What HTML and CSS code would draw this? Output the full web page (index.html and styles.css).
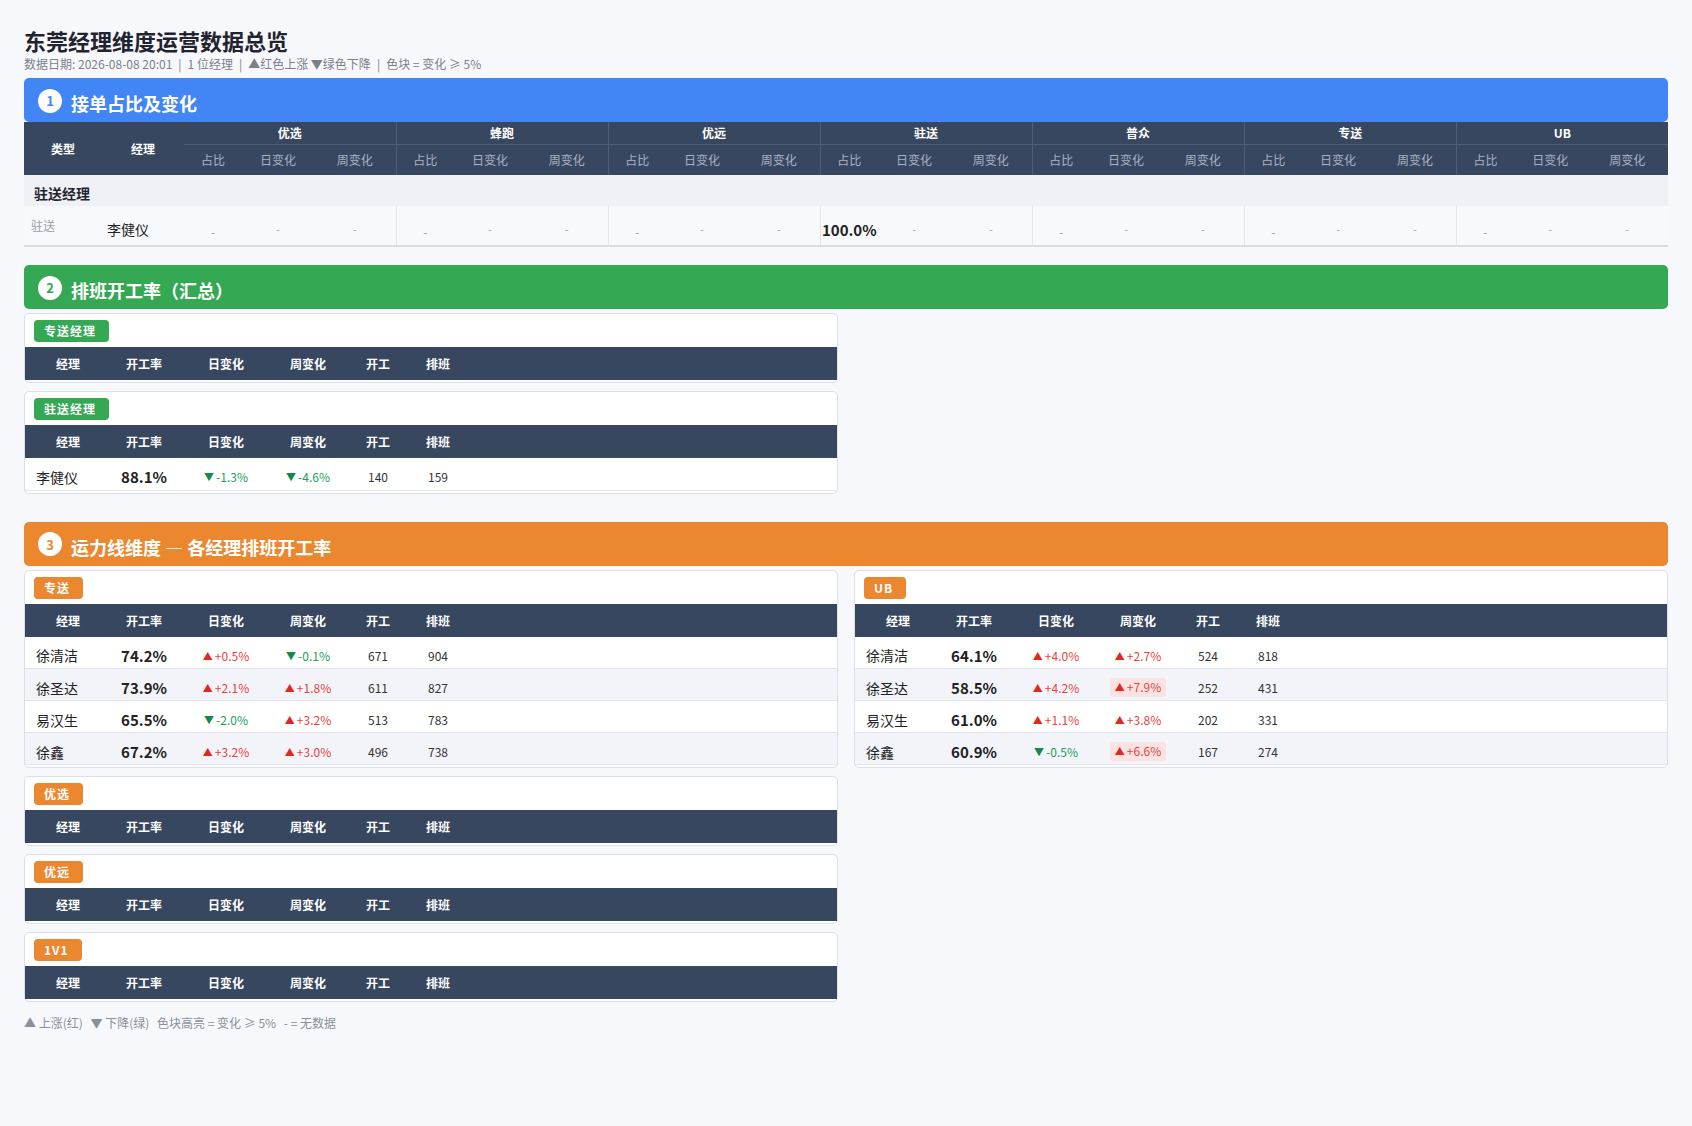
FILE: index.html
```html
<!DOCTYPE html>
<html lang="zh-CN">
<head>
<meta charset="utf-8">
<title>东莞经理维度运营数据总览</title>
<link rel="stylesheet" href="styles.css">
</head>
<body>
<div class="page">
  <h1 class="title">东莞经理维度运营数据总览</h1>
  <div class="subtitle">数据日期: 2026-08-08 20:01<span class="sep">|</span>1 位经理<span class="sep">|</span>▲红色上涨 ▼绿色下降<span class="sep">|</span>色块 = 变化 ≥ 5%</div>

  <section class="section first">
    <div class="sec-head sec-blue"><span class="sec-num">1</span><span class="sec-title">接单占比及变化</span></div>
    <table class="share">
      <colgroup>
        <col class="c-type"><col class="c-mgr">
        <col class="c-pct"><col class="c-day"><col class="c-week">
        <col class="c-pct"><col class="c-day"><col class="c-week">
        <col class="c-pct"><col class="c-day"><col class="c-week">
        <col class="c-pct"><col class="c-day"><col class="c-week">
        <col class="c-pct"><col class="c-day"><col class="c-week">
        <col class="c-pct"><col class="c-day"><col class="c-week">
        <col class="c-pct"><col class="c-day"><col class="c-week">
      </colgroup>
      <thead>
        <tr class="h-group">
          <th rowspan="2" class="h-fixed">类型</th>
          <th rowspan="2" class="h-fixed">经理</th>
          <th colspan="3" class="g">优选</th>
          <th colspan="3" class="g gs">蜂跑</th>
          <th colspan="3" class="g gs">优远</th>
          <th colspan="3" class="g gs">驻送</th>
          <th colspan="3" class="g gs">普众</th>
          <th colspan="3" class="g gs">专送</th>
          <th colspan="3" class="g gs">UB</th>
        </tr>
        <tr class="h-sub">
          <th>占比</th><th>日变化</th><th>周变化</th>
          <th class="gs">占比</th><th>日变化</th><th>周变化</th>
          <th class="gs">占比</th><th>日变化</th><th>周变化</th>
          <th class="gs">占比</th><th>日变化</th><th>周变化</th>
          <th class="gs">占比</th><th>日变化</th><th>周变化</th>
          <th class="gs">占比</th><th>日变化</th><th>周变化</th>
          <th class="gs">占比</th><th>日变化</th><th>周变化</th>
        </tr>
      </thead>
      <tbody>
        <tr class="cat-row"><td colspan="23">驻送经理</td></tr>
        <tr class="data-row">
          <td class="type">驻送</td>
          <td class="mgr">李健仪</td>
          <td class="pct dash-b">-</td><td class="dash">-</td><td class="dash">-</td>
          <td class="pct dash-b gs">-</td><td class="dash">-</td><td class="dash">-</td>
          <td class="pct dash-b gs">-</td><td class="dash">-</td><td class="dash">-</td>
          <td class="pct gs">100.0%</td><td class="dash">-</td><td class="dash">-</td>
          <td class="pct dash-b gs">-</td><td class="dash">-</td><td class="dash">-</td>
          <td class="pct dash-b gs">-</td><td class="dash">-</td><td class="dash">-</td>
          <td class="pct dash-b gs">-</td><td class="dash">-</td><td class="dash">-</td>
        </tr>
      </tbody>
    </table>
  </section>

  <section class="section">
    <div class="sec-head sec-green"><span class="sec-num">2</span><span class="sec-title">排班开工率（汇总）</span></div>
    <div class="cols">
      <div class="col">
        <div class="card">
          <div class="card-head"><span class="tag tag-green">专送经理</span></div>
          <table class="rate">
            <colgroup><col class="r1"><col class="r2"><col class="r3"><col class="r4"><col class="r5"><col class="r6"><col></colgroup>
            <thead><tr><th>经理</th><th>开工率</th><th>日变化</th><th>周变化</th><th>开工</th><th>排班</th><th></th></tr></thead>
          </table>
        </div>
        <div class="card">
          <div class="card-head"><span class="tag tag-green">驻送经理</span></div>
          <table class="rate">
            <colgroup><col class="r1"><col class="r2"><col class="r3"><col class="r4"><col class="r5"><col class="r6"><col></colgroup>
            <thead><tr><th>经理</th><th>开工率</th><th>日变化</th><th>周变化</th><th>开工</th><th>排班</th><th></th></tr></thead>
            <tbody>
              <tr><td class="name">李健仪</td><td class="rv">88.1%</td><td><span class="chg down"><span class="arr">▼</span>-1.3%</span></td><td><span class="chg down"><span class="arr">▼</span>-4.6%</span></td><td>140</td><td>159</td><td></td></tr>
            </tbody>
          </table>
        </div>
      </div>
      <div class="col"></div>
    </div>
  </section>

  <section class="section sec-wide">
    <div class="sec-head sec-orange"><span class="sec-num">3</span><span class="sec-title">运力线维度 — 各经理排班开工率</span></div>
    <div class="cols">
      <div class="col">
        <div class="card">
          <div class="card-head"><span class="tag tag-orange">专送</span></div>
          <table class="rate">
            <colgroup><col class="r1"><col class="r2"><col class="r3"><col class="r4"><col class="r5"><col class="r6"><col></colgroup>
            <thead><tr><th>经理</th><th>开工率</th><th>日变化</th><th>周变化</th><th>开工</th><th>排班</th><th></th></tr></thead>
            <tbody>
              <tr><td class="name">徐清洁</td><td class="rv">74.2%</td><td><span class="chg up"><span class="arr">▲</span>+0.5%</span></td><td><span class="chg down"><span class="arr">▼</span>-0.1%</span></td><td>671</td><td>904</td><td></td></tr>
              <tr><td class="name">徐圣达</td><td class="rv">73.9%</td><td><span class="chg up"><span class="arr">▲</span>+2.1%</span></td><td><span class="chg up"><span class="arr">▲</span>+1.8%</span></td><td>611</td><td>827</td><td></td></tr>
              <tr><td class="name">易汉生</td><td class="rv">65.5%</td><td><span class="chg down"><span class="arr">▼</span>-2.0%</span></td><td><span class="chg up"><span class="arr">▲</span>+3.2%</span></td><td>513</td><td>783</td><td></td></tr>
              <tr><td class="name">徐鑫</td><td class="rv">67.2%</td><td><span class="chg up"><span class="arr">▲</span>+3.2%</span></td><td><span class="chg up"><span class="arr">▲</span>+3.0%</span></td><td>496</td><td>738</td><td></td></tr>
            </tbody>
          </table>
        </div>
        <div class="card">
          <div class="card-head"><span class="tag tag-orange">优选</span></div>
          <table class="rate">
            <colgroup><col class="r1"><col class="r2"><col class="r3"><col class="r4"><col class="r5"><col class="r6"><col></colgroup>
            <thead><tr><th>经理</th><th>开工率</th><th>日变化</th><th>周变化</th><th>开工</th><th>排班</th><th></th></tr></thead>
          </table>
        </div>
        <div class="card">
          <div class="card-head"><span class="tag tag-orange">优远</span></div>
          <table class="rate">
            <colgroup><col class="r1"><col class="r2"><col class="r3"><col class="r4"><col class="r5"><col class="r6"><col></colgroup>
            <thead><tr><th>经理</th><th>开工率</th><th>日变化</th><th>周变化</th><th>开工</th><th>排班</th><th></th></tr></thead>
          </table>
        </div>
        <div class="card">
          <div class="card-head"><span class="tag tag-orange">1V1</span></div>
          <table class="rate">
            <colgroup><col class="r1"><col class="r2"><col class="r3"><col class="r4"><col class="r5"><col class="r6"><col></colgroup>
            <thead><tr><th>经理</th><th>开工率</th><th>日变化</th><th>周变化</th><th>开工</th><th>排班</th><th></th></tr></thead>
          </table>
        </div>
      </div>
      <div class="col">
        <div class="card">
          <div class="card-head"><span class="tag tag-orange">UB</span></div>
          <table class="rate">
            <colgroup><col class="r1"><col class="r2"><col class="r3"><col class="r4"><col class="r5"><col class="r6"><col></colgroup>
            <thead><tr><th>经理</th><th>开工率</th><th>日变化</th><th>周变化</th><th>开工</th><th>排班</th><th></th></tr></thead>
            <tbody>
              <tr><td class="name">徐清洁</td><td class="rv">64.1%</td><td><span class="chg up"><span class="arr">▲</span>+4.0%</span></td><td><span class="chg up"><span class="arr">▲</span>+2.7%</span></td><td>524</td><td>818</td><td></td></tr>
              <tr><td class="name">徐圣达</td><td class="rv">58.5%</td><td><span class="chg up"><span class="arr">▲</span>+4.2%</span></td><td><span class="chg up hl"><span class="arr">▲</span>+7.9%</span></td><td>252</td><td>431</td><td></td></tr>
              <tr><td class="name">易汉生</td><td class="rv">61.0%</td><td><span class="chg up"><span class="arr">▲</span>+1.1%</span></td><td><span class="chg up"><span class="arr">▲</span>+3.8%</span></td><td>202</td><td>331</td><td></td></tr>
              <tr><td class="name">徐鑫</td><td class="rv">60.9%</td><td><span class="chg down"><span class="arr">▼</span>-0.5%</span></td><td><span class="chg up hl"><span class="arr">▲</span>+6.6%</span></td><td>167</td><td>274</td><td></td></tr>
            </tbody>
          </table>
        </div>
      </div>
    </div>
  </section>

  <div class="legend">
    <span>▲ 上涨(红)</span>
    <span>▼ 下降(绿)</span>
    <span>色块高亮 = 变化 ≥ 5%</span>
    <span>- = 无数据</span>
  </div>
</div>
</body>
</html>
```

FILE: styles.css
```css
* { box-sizing: border-box; }
html, body { margin: 0; padding: 0; }
body {
  background: #f7f8fc;
  font-family: "Noto Sans CJK SC", "Noto Sans", sans-serif;
  color: #1f2430;
}
.page { padding: 26px 24px 40px; }

.title {
  margin: 0;
  font-size: 22px;
  line-height: 28px;
  font-weight: 700;
  color: #1f2430;
}
.subtitle {
  margin-top: 2px;
  font-size: 12px;
  line-height: 16px;
  color: #7b808c;
}
.subtitle .sep { margin: 0 6px; }

.section { margin-top: 18px; }
.section.first { margin-top: 6px; }
.section.sec-wide { margin-top: 20px; }

.sec-head {
  height: 44px;
  border-radius: 5px;
  display: flex;
  align-items: center;
  padding-left: 14px;
  color: #fff;
}
.sec-blue { background: #4285f4; color: #fff; }
.sec-green { background: #34a853; }
.sec-orange { background: #ea872f; }
.sec-num {
  width: 24px;
  height: 24px;
  border-radius: 50%;
  background: #fff;
  display: flex;
  align-items: center;
  justify-content: center;
  font-size: 13px;
  font-weight: 700;
  line-height: 1;
  margin-top: 1px;
}
.sec-blue .sec-num { color: #4285f4; }
.sec-green .sec-num { color: #34a853; }
.sec-orange .sec-num { color: #ea872f; }
.sec-title {
  margin-left: 9px;
  font-size: 18px;
  line-height: 22px;
  font-weight: 700;
  padding-top: 6px;
}

/* section 1 table */
.share {
  width: 100%;
  border-collapse: collapse;
  table-layout: fixed;
  font-size: 12px;
}
.share col.c-type { width: 78px; }
.share col.c-mgr { width: 82px; }
.share col.c-pct { width: 58px; }
.share col.c-day { width: 72px; }
.share col.c-week { width: 82px; }
.share thead th {
  background: #374760;
  color: #fff;
  padding: 0;
  text-align: center;
}
.share .h-fixed { font-weight: 700; font-size: 12px; }
.share .h-group th.g {
  height: 22px;
  font-weight: 700;
  font-size: 12px;
  border-bottom: 1px solid #4f5e76;
}
.share .h-sub th {
  height: 31px;
  font-weight: 400;
  color: #a9b2c3;
}
.share thead th.gs { border-left: 1px solid #4f5e76; }

.share .cat-row td {
  background: #f0f1f6;
  height: 31px;
  font-size: 14px;
  font-weight: 700;
  padding: 4px 0 0 10px;
  color: #1f2430;
}
.share .data-row td {
  height: 40px;
  background: #f8f9fc;
  border-bottom: 2px solid #d9dce4;
  padding: 7px 0 0;
  text-align: center;
  color: #222;
}
.share .data-row td.gs { border-left: 1px solid #e3e5ec; }
.share .data-row td.type {
  text-align: left;
  padding: 0 0 0 7px;
  font-size: 12px;
  color: #9a9ea8;
}
.share .data-row td.mgr {
  text-align: left;
  padding-left: 5px;
  font-size: 14px;
  color: #222;
}
.share .data-row td.pct {
  font-size: 15px;
  font-weight: 700;
}
.share .data-row td.dash {
  font-size: 11px;
  color: #9ca3af;
}
.share .data-row td.dash-b {
  color: #9ca3af;
  font-weight: 400;
  padding-top: 11px;
  font-size: 12px;
}

/* two column area */
.cols {
  display: grid;
  grid-template-columns: 1fr 1fr;
  column-gap: 16px;
  margin-top: 4px;
}

.card {
  background: #fff;
  border: 1px solid #dadfe9;
  border-radius: 5px;
  padding: 6px 0 2px;
  margin-bottom: 8px;
}
.card-head {
  height: 22px;
  margin-bottom: 5px;
  display: flex;
  align-items: center;
  padding-left: 9px;
}
.tag {
  display: inline-block;
  height: 22px;
  line-height: 22px;
  padding: 0 13px 0 10px;
  letter-spacing: 1px;
  border-radius: 4px;
  color: #fff;
  font-size: 12px;
  font-weight: 700;
}
.tag-green { background: #34a853; }
.tag-orange { background: #ea872f; }

.rate {
  width: 100%;
  border-collapse: collapse;
  table-layout: fixed;
}
.rate col.r1 { width: 86px; }
.rate col.r2 { width: 66px; }
.rate col.r3 { width: 98px; }
.rate col.r4 { width: 66px; }
.rate col.r5 { width: 74px; }
.rate col.r6 { width: 46px; }
.rate th {
  background: #374760;
  color: #fff;
  height: 33px;
  padding: 0;
  font-size: 12px;
  font-weight: 700;
  text-align: center;
}
.rate td {
  height: 32px;
  border-bottom: 1px solid #e3e6ee;
  padding: 6px 0 0;
  text-align: center;
  font-size: 12px;
  color: #333;
  white-space: nowrap;
}
.rate tbody tr:nth-child(even) td { background: #f3f4f9; }
.rate td.name {
  text-align: left;
  padding-left: 11px;
  font-size: 14px;
  color: #222;
}
.rate td.rv {
  font-size: 15px;
  font-weight: 700;
  color: #222;
}

.chg { font-size: 12px; }
.chg.up { color: #e5453b; }
.chg.down { color: #21a05c; }
.arr {
  font-size: 10px;
  margin-right: 2px;
  position: relative;
  top: -1px;
}
.up .arr { color: #e0281e; }
.down .arr { color: #138a48; }
.chg.hl {
  display: inline-block;
  background: #fde2e2;
  padding: 1px 5px;
  border-radius: 3px;
  line-height: 16px;
}

.legend {
  margin-top: 5px;
  font-size: 12px;
  line-height: 16px;
  color: #8a8f9c;
}
.legend span { margin-right: 5px; }
```
